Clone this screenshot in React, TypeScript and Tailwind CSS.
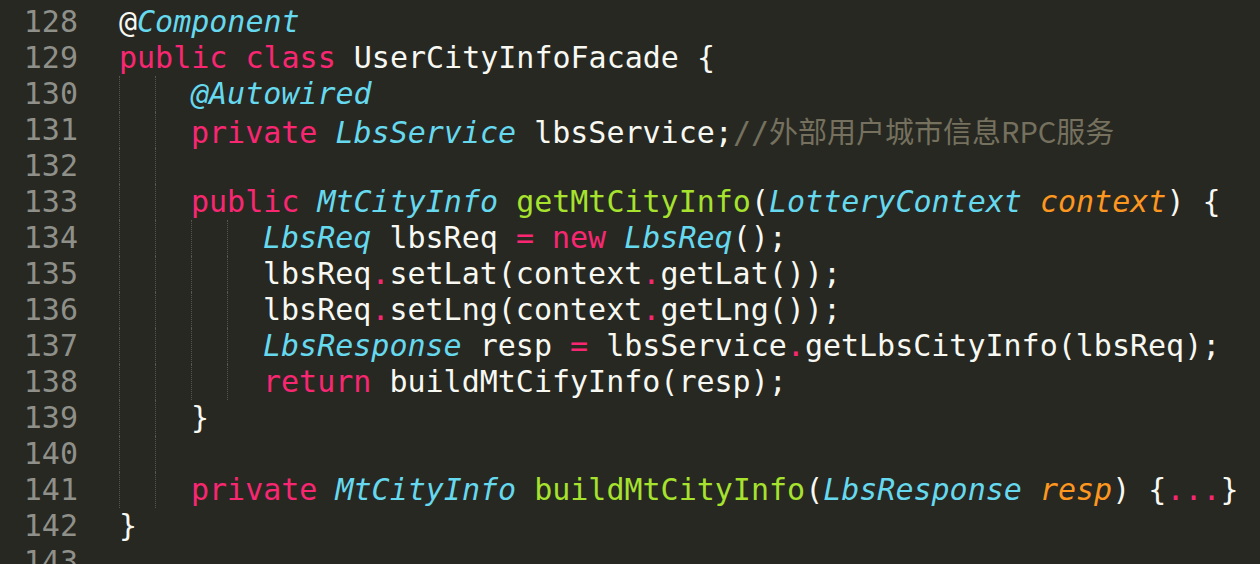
import React from "react";

type Tok = [string, string];

const W = "text-[#f8f8f2]";
const K = "text-[#f92672]";
const T = "text-[#66d9ef] italic";
const F = "text-[#a6e22e]";
const P = "text-[#fd971f] italic";
const C = "text-[#75715e]";

type Line = { no: number; guides: number; toks: Tok[]; comment?: string };

const lines: Line[] = [
  { no: 128, guides: 0, toks: [[W, "@"], [T, "Component"]] },
  { no: 129, guides: 0, toks: [[K, "public"], [W, " "], [K, "class"], [W, " UserCityInfoFacade {"]] },
  { no: 130, guides: 2, toks: [[T, "@Autowired"]] },
  { no: 131, guides: 2, toks: [[K, "private"], [W, " "], [T, "LbsService"], [W, " lbsService;"], [C, "//"]], comment: "外部用户城市信息RPC服务" },
  { no: 132, guides: 2, toks: [] },
  { no: 133, guides: 2, toks: [[K, "public"], [W, " "], [T, "MtCityInfo"], [W, " "], [F, "getMtCityInfo"], [W, "("], [T, "LotteryContext"], [W, " "], [P, "context"], [W, ") {"]] },
  { no: 134, guides: 4, toks: [[T, "LbsReq"], [W, " lbsReq "], [K, "="], [W, " "], [K, "new"], [W, " "], [T, "LbsReq"], [W, "();"]] },
  { no: 135, guides: 4, toks: [[W, "lbsReq"], [K, "."], [W, "setLat(context"], [K, "."], [W, "getLat());"]] },
  { no: 136, guides: 4, toks: [[W, "lbsReq"], [K, "."], [W, "setLng(context"], [K, "."], [W, "getLng());"]] },
  { no: 137, guides: 4, toks: [[T, "LbsResponse"], [W, " resp "], [K, "="], [W, " lbsService"], [K, "."], [W, "getLbsCityInfo(lbsReq);"]] },
  { no: 138, guides: 4, toks: [[K, "return"], [W, " buildMtCifyInfo(resp);"]] },
  { no: 139, guides: 2, toks: [[W, "}"]] },
  { no: 140, guides: 2, toks: [] },
  { no: 141, guides: 2, toks: [[K, "private"], [W, " "], [T, "MtCityInfo"], [W, " "], [F, "buildMtCityInfo"], [W, "("], [T, "LbsResponse"], [W, " "], [P, "resp"], [W, ") {"], [K, "..."], [W, "}"]] },
  { no: 142, guides: 0, toks: [[W, "}"]] },
  { no: 143, guides: 0, toks: [] },
];

function CodeLine({ line }: { line: Line }) {
  return (
    <div className="flex h-[36px]">
      <div className="w-[78px] shrink-0 text-right text-[#8f908a]">{line.no}</div>
      <div className="flex ml-[41px]">
        {Array.from({ length: line.guides }).map((_, i) => (
          <span key={i} className="w-[36px] h-full shrink-0 border-l border-dotted border-[#55564f]" />
        ))}
        <span className="whitespace-pre">
          {line.toks.map(([cls, txt], i) => (
            <span key={i} className={cls}>{txt}</span>
          ))}
          {line.comment && (
            <span className="text-[#75715e] text-[29px] font-['Noto_Sans_CJK_SC',sans-serif]">{line.comment}</span>
          )}
        </span>
      </div>
    </div>
  );
}

export default function App() {
  return (
    <div className="w-full h-[564px] overflow-hidden bg-[#272822] pt-[4px] font-['DejaVu_Sans_Mono','Noto_Sans_CJK_SC',monospace] text-[30px] leading-[36px] antialiased">
      {lines.map((l) => (
        <CodeLine key={l.no} line={l} />
      ))}
    </div>
  );
}
